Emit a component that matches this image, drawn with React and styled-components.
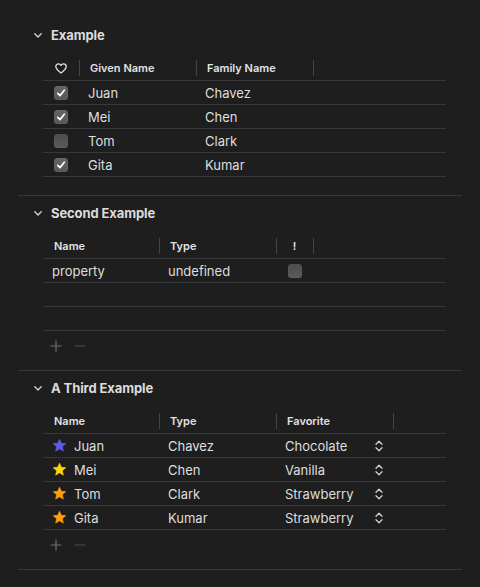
import styled, { createGlobalStyle } from 'styled-components';

const GlobalStyle = createGlobalStyle`
  html, body {
    margin: 0;
    padding: 0;
    background: #1e1e1e;
  }
  body {
    font-family: Inter, "Noto Sans", "Liberation Sans", sans-serif;
    color: #dfdfdf;
    -webkit-font-smoothing: antialiased;
  }
`

const Page = styled.div`
  min-height: 587px;
  padding: 18px 18px 0 18px;
  box-sizing: border-box;
`

const Section = styled.section`
  border-bottom: 1px solid #363636;
  padding-bottom: ${p => p.$footer ? '0' : '18px'};
`

const TitleRow = styled.div`
  display: flex;
  align-items: center;
  height: 24px;
  margin: 5px 0 9px 0;
  padding-left: 16px;
  gap: 9px;
`

const Title = styled.span`
  font-size: 13px;
  font-weight: 700;
  color: #dcdcdc;
  letter-spacing: -0.1px;
`

const Table = styled.div`
  margin: 0 16px 0 25px;
`

const HeaderRow = styled.div`
  display: grid;
  grid-template-columns: ${p => p.$cols};
  height: 24px;
  border-bottom: 1px solid #383838;
`

const HeaderCell = styled.div`
  display: flex;
  align-items: center;
  justify-content: ${p => p.$center ? 'center' : 'flex-start'};
  padding-left: ${p => p.$center ? '0' : '11px'};
  font-size: 11px;
  font-weight: 600;
  color: #e2e2e2;
  position: relative;
  &::after {
    content: "";
    position: absolute;
    right: -1px;
    top: 4px;
    height: 16px;
    width: 1px;
    background: #444444;
  }
`

const Row = styled.div`
  display: grid;
  grid-template-columns: ${p => p.$cols};
  height: 23px;
  border-bottom: 1px solid #383838;
`

const Cell = styled.div`
  display: flex;
  align-items: center;
  justify-content: ${p => p.$center ? 'center' : 'flex-start'};
  padding-left: ${p => p.$center ? '0' : p.$icon ? '9px' : '9px'};
  gap: 7px;
  font-size: 13px;
  color: #dedede;
  white-space: nowrap;
  ${p => p.$spread && 'justify-content: space-between; padding-right: 10px;'}
`

const CheckBox = styled.span`
  width: 14px;
  height: 14px;
  border-radius: 3.5px;
  background: ${p => p.$on
    ? 'linear-gradient(#646464, #585858)'
    : 'linear-gradient(#4c4c4c, #5a5a5a)'};
  box-shadow: inset 0 0 0 0.5px rgba(255,255,255,0.06);
  display: flex;
  align-items: center;
  justify-content: center;
`

const Footer = styled.div`
  display: flex;
  align-items: center;
  gap: 12px;
  height: 30px;
  padding-left: 32px;
  margin-bottom: 9px;
`

const SmallBtn = styled.span`
  display: flex;
  width: 12px;
  height: 12px;
  align-items: center;
  justify-content: center;
  color: ${p => p.$dim ? '#464646' : '#707070'};
`

const Chevron = () => (
  <svg width="8" height="5" viewBox="0 0 8 5">
    <path d="M0.8 0.8 L4 4 L7.2 0.8" fill="none" stroke="#cfcfcf" strokeWidth="1.4" strokeLinecap="round" strokeLinejoin="round" />
  </svg>
)

const Check = () => (
  <svg width="10" height="10" viewBox="0 0 10 10">
    <path d="M1.8 5.3 L4 7.6 L8.3 2.2" fill="none" stroke="#ffffff" strokeWidth="1.7" strokeLinecap="round" strokeLinejoin="round" />
  </svg>
)

const Heart = () => (
  <svg width="12" height="11" viewBox="0 0 12 11">
    <path d="M6 10 C3 7.8 0.8 6 0.8 3.6 C0.8 2 2 0.8 3.5 0.8 C4.6 0.8 5.5 1.5 6 2.4 C6.5 1.5 7.4 0.8 8.5 0.8 C10 0.8 11.2 2 11.2 3.6 C11.2 6 9 7.8 6 10 Z" fill="none" stroke="#e4e4e4" strokeWidth="1.3" strokeLinejoin="round" />
  </svg>
)

const Star = ({ color }) => (
  <svg width="15" height="15" viewBox="0 0 24 24">
    <path d="M12 1.8 L14.9 8.4 L22 9.1 L16.6 13.9 L18.2 21 L12 17.3 L5.8 21 L7.4 13.9 L2 9.1 L9.1 8.4 Z" fill={color} stroke={color} strokeWidth="1" strokeLinejoin="round" />
  </svg>
)

const UpDown = () => (
  <svg width="8" height="12" viewBox="0 0 8 12">
    <path d="M1 4.2 L4 1.2 L7 4.2 M1 7.8 L4 10.8 L7 7.8" fill="none" stroke="#d2d2d2" strokeWidth="1.3" strokeLinecap="round" strokeLinejoin="round" />
  </svg>
)

const Plus = () => (
  <svg width="12" height="12" viewBox="0 0 12 12">
    <path d="M6 0.5 V11.5 M0.5 6 H11.5" stroke="currentColor" strokeWidth="1.2" />
  </svg>
)

const Minus = () => (
  <svg width="12" height="12" viewBox="0 0 12 12">
    <path d="M0.5 6 H11.5" stroke="currentColor" strokeWidth="1.2" />
  </svg>
)

const people = [
  { given: 'Juan', family: 'Chavez', fav: true, flavor: 'Chocolate', star: '#5e5ce6' },
  { given: 'Mei', family: 'Chen', fav: true, flavor: 'Vanilla', star: '#ffd60a' },
  { given: 'Tom', family: 'Clark', fav: false, flavor: 'Strawberry', star: '#ff9f0a' },
  { given: 'Gita', family: 'Kumar', fav: true, flavor: 'Strawberry', star: '#ff9f0a' },
]

const cols1 = '36px 117px 117px 1fr'
const cols2 = '116px 117px 37px 1fr'
const cols3 = '116px 117px 117px 1fr'

export default function App() {
  return (
    <Page>
      <GlobalStyle />

      <Section>
        <TitleRow><Chevron /><Title>Example</Title></TitleRow>
        <Table>
          <HeaderRow $cols={cols1}>
            <HeaderCell $center><Heart /></HeaderCell>
            <HeaderCell>Given Name</HeaderCell>
            <HeaderCell>Family Name</HeaderCell>
          </HeaderRow>
          {people.map((p, i) => (
            <Row key={i} $cols={cols1}>
              <Cell $center><CheckBox $on={p.fav}>{p.fav && <Check />}</CheckBox></Cell>
              <Cell>{p.given}</Cell>
              <Cell>{p.family}</Cell>
            </Row>
          ))}
        </Table>
      </Section>

      <Section $footer>
        <TitleRow><Chevron /><Title>Second Example</Title></TitleRow>
        <Table>
          <HeaderRow $cols={cols2}>
            <HeaderCell>Name</HeaderCell>
            <HeaderCell>Type</HeaderCell>
            <HeaderCell $center>!</HeaderCell>
          </HeaderRow>
          <Row $cols={cols2}>
            <Cell>property</Cell>
            <Cell>undefined</Cell>
            <Cell $center><CheckBox /></Cell>
          </Row>
          <Row $cols={cols2} />
          <Row $cols={cols2} />
        </Table>
        <Footer>
          <SmallBtn><Plus /></SmallBtn>
          <SmallBtn $dim><Minus /></SmallBtn>
        </Footer>
      </Section>

      <Section $footer>
        <TitleRow><Chevron /><Title>A Third Example</Title></TitleRow>
        <Table>
          <HeaderRow $cols={cols3}>
            <HeaderCell>Name</HeaderCell>
            <HeaderCell>Type</HeaderCell>
            <HeaderCell>Favorite</HeaderCell>
          </HeaderRow>
          {people.map((p, i) => (
            <Row key={i} $cols={cols3}>
              <Cell $icon><Star color={p.star} />{p.given}</Cell>
              <Cell>{p.family}</Cell>
              <Cell $spread>{p.flavor}<UpDown /></Cell>
            </Row>
          ))}
        </Table>
        <Footer>
          <SmallBtn><Plus /></SmallBtn>
          <SmallBtn $dim><Minus /></SmallBtn>
        </Footer>
      </Section>
    </Page>
  )
}
